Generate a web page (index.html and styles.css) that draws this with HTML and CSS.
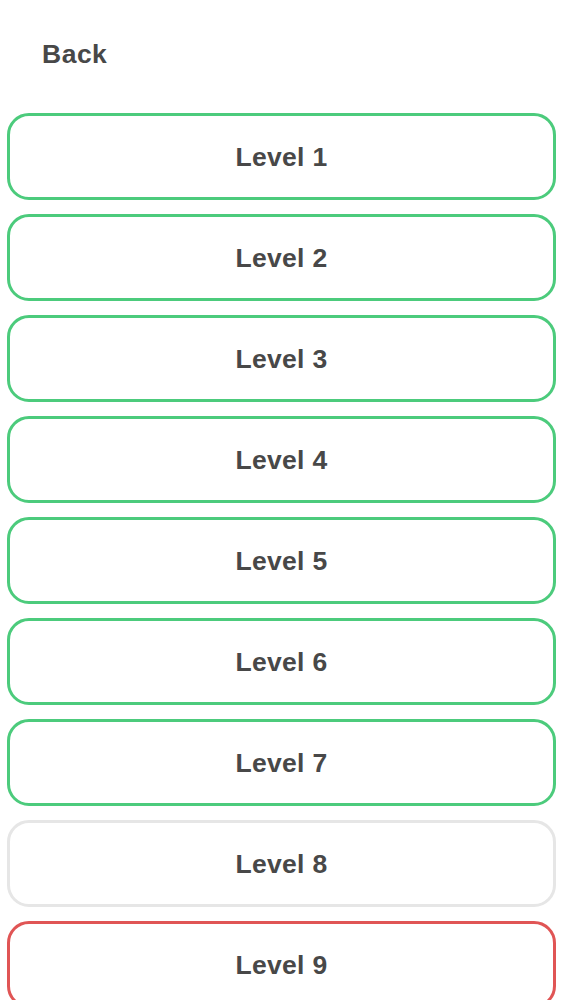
FILE: index.html
```html
<!DOCTYPE html>
<html>
<head>
<meta charset="utf-8">
<link rel="stylesheet" href="styles.css">
</head>
<body>
<div class="screen">
  <div class="header"><span class="back">Back</span></div>
  <div class="levels">
    <div class="level done">Level 1</div>
    <div class="level done">Level 2</div>
    <div class="level done">Level 3</div>
    <div class="level done">Level 4</div>
    <div class="level done">Level 5</div>
    <div class="level done">Level 6</div>
    <div class="level done">Level 7</div>
    <div class="level idle">Level 8</div>
    <div class="level fail">Level 9</div>
  </div>
</div>
</body>
</html>
```
FILE: styles.css
```css
html, body {
  margin: 0;
  padding: 0;
  background: #ffffff;
}
body {
  font-family: "Liberation Sans", Arial, sans-serif;
  color: #484848;
  overflow: hidden;
}
.screen {
  width: 563px;
  height: 1000px;
  overflow: hidden;
}
.header {
  height: 113px;
  padding-left: 42px;
  box-sizing: border-box;
  padding-top: 39px;
}
.back {
  font-size: 26.5px;
  font-weight: bold;
  color: #484848;
  letter-spacing: 0.5px;
}
.levels {
  display: flex;
  flex-direction: column;
  gap: 14px;
  padding: 0 7px;
}
.level {
  height: 87px;
  box-sizing: border-box;
  border: 3px solid #4ccb7c;
  border-radius: 22px;
  display: flex;
  align-items: center;
  justify-content: center;
  font-size: 26.5px;
  font-weight: bold;
  color: #484848;
  letter-spacing: 0.3px;
  background: #fff;
  padding-top: 1px;
}
.level.idle {
  border-color: #e6e6e6;
}
.level.fail {
  border-color: #e05555;
}
```
